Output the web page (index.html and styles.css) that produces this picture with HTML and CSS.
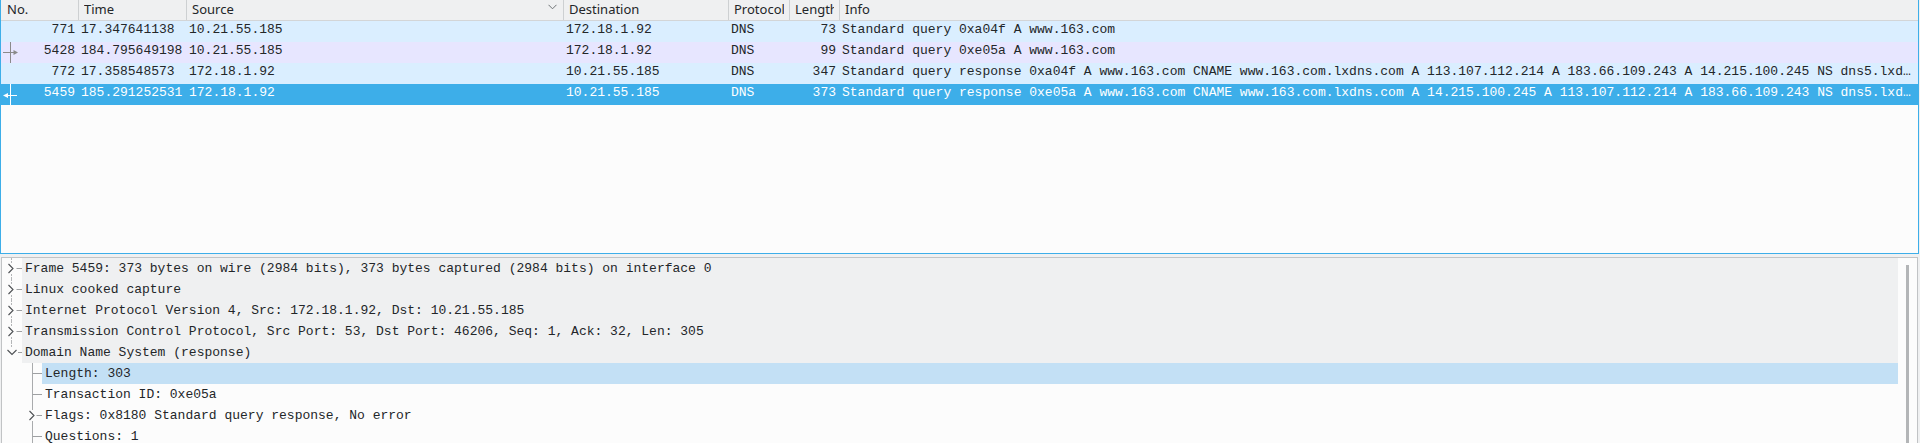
FILE: index.html
```html
<!DOCTYPE html>
<html>
<head>
<meta charset="utf-8">
<link rel="stylesheet" href="styles.css">
</head>
<body>
<div class="window">
  <div class="packet-list">
    <div class="hdr">
      <div class="hc"><span class="ht">No.</span></div>
      <div class="hc"><span class="ht">Time</span></div>
      <div class="hc hc-sort"><span class="ht">Source</span>
        <svg class="sort" width="9" height="6" viewBox="0 0 9 6"><polyline points="0.5,0.8 4.5,4.8 8.5,0.8" fill="none" stroke="#6e7275" stroke-width="1"/></svg>
      </div>
      <div class="hc"><span class="ht">Destination</span></div>
      <div class="hc"><span class="ht">Protocol</span></div>
      <div class="hc"><span class="ht">Length</span></div>
      <div class="hc"><span class="ht">Info</span></div>
    </div>

    <div class="row udp">
      <div class="c c-no"><svg class="rel" width="20" height="21"></svg><span class="n">771</span></div>
      <div class="c">17.347641138</div>
      <div class="c">10.21.55.185</div>
      <div class="c">172.18.1.92</div>
      <div class="c">DNS</div>
      <div class="c r">73</div>
      <div class="c">Standard query 0xa04f A www.163.com</div>
    </div>
    <div class="row tcp">
      <div class="c c-no"><svg class="rel" width="20" height="21" viewBox="0 0 20 21"><line x1="9.5" y1="0" x2="9.5" y2="21" stroke="#8a8a8a" stroke-width="1"/><line x1="2" y1="10.5" x2="14" y2="10.5" stroke="#8a8a8a" stroke-width="1"/><polygon points="12.5,8 17,10.5 12.5,13" fill="#8a8a8a"/></svg><span class="n">5428</span></div>
      <div class="c">184.795649198</div>
      <div class="c">10.21.55.185</div>
      <div class="c">172.18.1.92</div>
      <div class="c">DNS</div>
      <div class="c r">99</div>
      <div class="c">Standard query 0xe05a A www.163.com</div>
    </div>
    <div class="row udp">
      <div class="c c-no"><svg class="rel" width="20" height="21"></svg><span class="n">772</span></div>
      <div class="c">17.358548573</div>
      <div class="c">172.18.1.92</div>
      <div class="c">10.21.55.185</div>
      <div class="c">DNS</div>
      <div class="c r">347</div>
      <div class="c">Standard query response 0xa04f A www.163.com CNAME www.163.com.lxdns.com A 113.107.112.214 A 183.66.109.243 A 14.215.100.245 NS dns5.lxdns.com NS dns6.lxdns.com</div>
    </div>
    <div class="row selected">
      <div class="c c-no"><svg class="rel" width="20" height="21" viewBox="0 0 20 21"><line x1="9.5" y1="0" x2="9.5" y2="21" stroke="#ffffff" stroke-width="1"/><line x1="5" y1="11.5" x2="16" y2="11.5" stroke="#ffffff" stroke-width="1"/><polygon points="2,11.5 7,9 7,14" fill="#ffffff"/></svg><span class="n">5459</span></div>
      <div class="c">185.291252531</div>
      <div class="c">172.18.1.92</div>
      <div class="c">10.21.55.185</div>
      <div class="c">DNS</div>
      <div class="c r">373</div>
      <div class="c">Standard query response 0xe05a A www.163.com CNAME www.163.com.lxdns.com A 14.215.100.245 A 113.107.112.214 A 183.66.109.243 NS dns5.lxdns.com NS dns6.lxdns.com</div>
    </div>
  </div>

  <div class="details">
    <div class="tree">
      <div class="trow top">
        <svg class="g0" width="20" height="21" viewBox="0 0 20 21"><line x1="9.5" y1="0" x2="9.5" y2="5" class="dl"/><line x1="9.5" y1="16" x2="9.5" y2="21" class="dl"/><polyline points="6.5,6 11,10.5 6.5,15" class="ar"/><line x1="14.5" y1="10.5" x2="20" y2="10.5" class="hl"/></svg>
        <div class="tt">Frame 5459: 373 bytes on wire (2984 bits), 373 bytes captured (2984 bits) on interface 0</div>
      </div>
      <div class="trow top">
        <svg class="g0" width="20" height="21" viewBox="0 0 20 21"><line x1="9.5" y1="0" x2="9.5" y2="5" class="dl"/><line x1="9.5" y1="16" x2="9.5" y2="21" class="dl"/><polyline points="6.5,6 11,10.5 6.5,15" class="ar"/><line x1="14.5" y1="10.5" x2="20" y2="10.5" class="hl"/></svg>
        <div class="tt">Linux cooked capture</div>
      </div>
      <div class="trow top">
        <svg class="g0" width="20" height="21" viewBox="0 0 20 21"><line x1="9.5" y1="0" x2="9.5" y2="5" class="dl"/><line x1="9.5" y1="16" x2="9.5" y2="21" class="dl"/><polyline points="6.5,6 11,10.5 6.5,15" class="ar"/><line x1="14.5" y1="10.5" x2="20" y2="10.5" class="hl"/></svg>
        <div class="tt">Internet Protocol Version 4, Src: 172.18.1.92, Dst: 10.21.55.185</div>
      </div>
      <div class="trow top">
        <svg class="g0" width="20" height="21" viewBox="0 0 20 21"><line x1="9.5" y1="0" x2="9.5" y2="5" class="dl"/><line x1="9.5" y1="16" x2="9.5" y2="21" class="dl"/><polyline points="6.5,6 11,10.5 6.5,15" class="ar"/><line x1="14.5" y1="10.5" x2="20" y2="10.5" class="hl"/></svg>
        <div class="tt">Transmission Control Protocol, Src Port: 53, Dst Port: 46206, Seq: 1, Ack: 32, Len: 305</div>
      </div>
      <div class="trow top">
        <svg class="g0" width="20" height="21" viewBox="0 0 20 21"><line x1="9.5" y1="0" x2="9.5" y2="6" class="dl"/><polyline points="5.5,8 10,12.5 14.5,8" class="ar"/><line x1="16" y1="10.5" x2="20" y2="10.5" class="hl"/></svg>
        <div class="tt">Domain Name System (response)</div>
      </div>
      <div class="trow sel">
        <svg class="g1" width="40" height="21" viewBox="0 0 40 21"><line x1="30.5" y1="0" x2="30.5" y2="21" class="vl"/><line x1="30.5" y1="10.5" x2="40" y2="10.5" class="hl"/></svg>
        <div class="tt">Length: 303</div>
      </div>
      <div class="trow">
        <svg class="g1" width="40" height="21" viewBox="0 0 40 21"><line x1="30.5" y1="0" x2="30.5" y2="21" class="vl"/><line x1="30.5" y1="10.5" x2="40" y2="10.5" class="hl"/></svg>
        <div class="tt">Transaction ID: 0xe05a</div>
      </div>
      <div class="trow">
        <svg class="g1" width="40" height="21" viewBox="0 0 40 21"><line x1="30.5" y1="0" x2="30.5" y2="5" class="vl"/><line x1="30.5" y1="16" x2="30.5" y2="21" class="vl"/><polyline points="27.5,6 32,10.5 27.5,15" class="ar"/><line x1="34.5" y1="10.5" x2="40" y2="10.5" class="hl"/></svg>
        <div class="tt">Flags: 0x8180 Standard query response, No error</div>
      </div>
      <div class="trow">
        <svg class="g1" width="40" height="21" viewBox="0 0 40 21"><line x1="30.5" y1="0" x2="30.5" y2="21" class="vl"/><line x1="30.5" y1="10.5" x2="40" y2="10.5" class="hl"/></svg>
        <div class="tt">Questions: 1</div>
      </div>
    </div>
    <div class="vscroll"><div class="thumb"></div></div>
  </div>
</div>
</body>
</html>
```

FILE: styles.css
```css
html, body {
  margin: 0;
  padding: 0;
}
body {
  background: #eff0f1;
  height: 443px;
  overflow: hidden;
  font-family: "Noto Sans", sans-serif;
  color: #232629;
}
.window {
  display: flex;
  flex-direction: column;
  gap: 3px;
  height: 443px;
}

/* ---------- packet list ---------- */
.packet-list {
  flex: none;
  height: 254px;
  box-sizing: border-box;
  margin-right: 1px;
  border: 1px solid #3daee9;
  border-top: 0;
  background: #fcfcfc;
}
.hdr, .row {
  display: grid;
  grid-template-columns: 77px 108px 377px 165px 61px 50px 1fr;
}
.hdr {
  height: 21px;
  box-sizing: border-box;
  border-bottom: 1px solid #d3d5d7;
  background: #eff0f1;
  font-family: "Noto Sans", sans-serif;
  font-size: 13px;
  color: #232629;
}
.hc {
  display: flex;
  align-items: flex-start;
  min-width: 0;
  border-left: 1px solid #cdd0d2;
  padding: 0 5px 0 5px;
  line-height: 18px;
}
.hc:first-child {
  border-left: 0;
  padding-left: 6px;
}
.ht {
  display: block;
  overflow-x: clip;
  overflow-y: visible;
  white-space: nowrap;
  min-width: 0;
}
.hc-sort {
  justify-content: space-between;
}
.sort {
  flex: none;
  margin-top: 4px;
  margin-right: 1px;
  display: block;
}

.row {
  height: 21px;
  font-family: "Liberation Mono", monospace;
  font-size: 13px;
  color: #232629;
}
.row.udp { background: #daeeff; }
.row.tcp { background: #e7e6ff; }
.row.selected { background: #3daee9; color: #ffffff; }
.c {
  min-width: 0;
  padding: 0 3px 4px 3px;
  line-height: 17px;
  white-space: nowrap;
  overflow: hidden;
  text-overflow: ellipsis;
}
.r { text-align: right; }
.c-no {
  display: flex;
  align-items: flex-start;
  padding: 0 3px 0 0;
}
.rel {
  display: block;
  flex: none;
}
.n {
  margin-left: auto;
  line-height: 17px;
}

/* ---------- packet details ---------- */
.details {
  flex: 1;
  display: flex;
  margin: 0 2px 0 1px;
  border: 1px solid #c1c3c5;
  border-bottom: 0;
  background: #fcfcfc;
  min-height: 0;
}
.tree {
  flex: none;
  width: 1896px;
}
.trow {
  display: flex;
  height: 21px;
}
.trow svg {
  display: block;
  flex: none;
}
.tt {
  flex: 1;
  min-width: 0;
  padding-left: 3px;
  font-family: "Liberation Mono", monospace;
  font-size: 13px;
  line-height: 21px;
  color: #232629;
  white-space: nowrap;
  overflow: hidden;
}
.top .tt { background: #eff0f1; }
.sel .tt { background: #c3e0f5; }

.dl { stroke: #b4b6b8; stroke-width: 1; stroke-dasharray: 2 1; }
.vl { stroke: #a9abad; stroke-width: 1; }
.hl { stroke: #9ea0a2; stroke-width: 1; }
.ar { fill: none; stroke: #4d5054; stroke-width: 1.1; }

.vscroll {
  flex: 1;
  display: flex;
  flex-direction: column;
  padding: 7px 0 0 8px;
}
.thumb {
  flex: 1;
  width: 3px;
  background: #b3b5b7;
}
```
